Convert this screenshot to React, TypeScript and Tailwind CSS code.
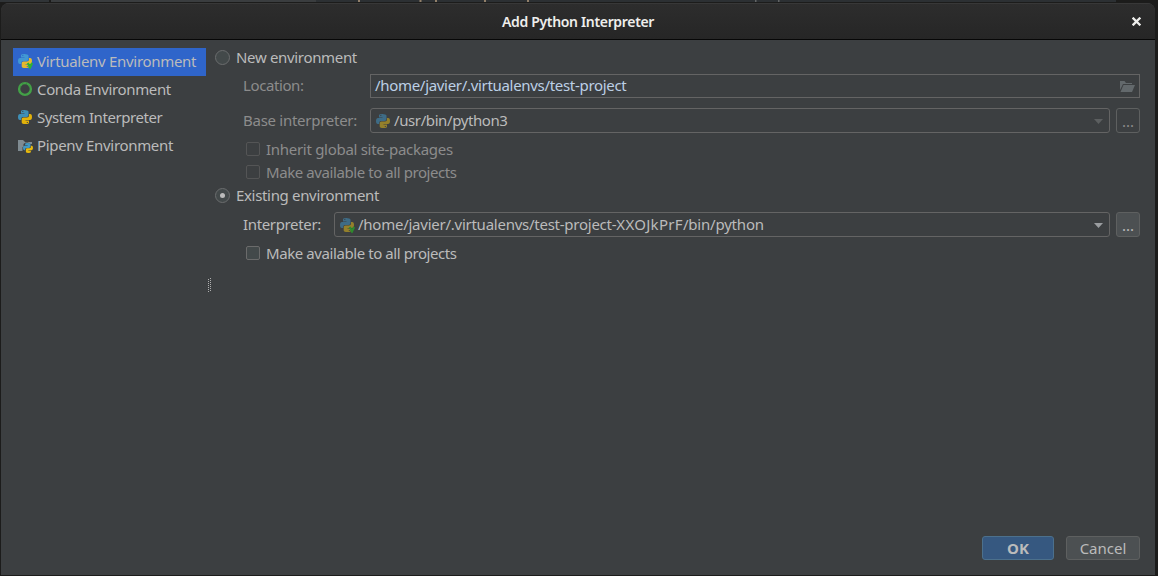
import type { ReactNode } from "react";

type Badge = "none" | "venv";

function PythonLogo({ blue, yellow, green = "#2fb52f", badge = "none" }: { blue: string; yellow: string; green?: string; badge?: Badge }) {
  return (
    <svg width="16" height="16" viewBox="0 0 16 16" className="shrink-0">
      <path
        fill={blue}
        fillRule="evenodd"
        d="M4 2.300Q4 1 7.500 1T11.500 2.600V6Q11.500 8 9.500 8H6Q4.200 8 4.200 10v1H2.800Q1 11 1 8t2-3h4.500V4.500H4zM5.300 2v1h1V2z"
      />
      <path
        fill={yellow}
        fillRule="evenodd"
        d="M12 5h1.200Q15 5 15 8t-2 3H8.500v.5H12v2q0 1.500-3.500 1.500T4.700 13.400v-3.200q0-1.700 1.700-1.700H10q2 0 2-1.900zM9.800 13v1h1v-1z"
      />
      {badge === "venv" && <path fill="none" stroke={green} strokeWidth="2.200" d="M10.800 10l2.200 4.500L15.200 10" />}
    </svg>
  );
}

function CondaLogo() {
  return (
    <svg width="16" height="16" viewBox="0 0 16 16" className="shrink-0">
      <circle cx="8" cy="8" r="5.900" fill="none" stroke="#43a047" strokeWidth="2.400" />
      <path d="M3 5l1.400 1M5.500 2.500l.8 1.500M9.500 2.200l-.4 1.500M12.700 5l-1.400.8" stroke="#34753a" strokeWidth=".6" />
    </svg>
  );
}

function PipenvLogo() {
  return (
    <svg width="16" height="16" viewBox="0 0 16 16" className="shrink-0">
      <path fill="#7f8b91" d="M1 3h5l2 2h7v2H13L11 5.500H8.500L6.500 7v3H5.500v4H1z" />
      <svg x="6" y="6" width="10" height="10" viewBox="1 1 14 14">
        <path fill="#4198c2" d="M4 2.200Q4 1 7.500 1T11.500 2.600V6Q11.500 8 9 8H6Q4 8 4 10v1H2.800Q1 11 1 8t2-3h4.500V4H4z" />
        <path fill="#e7b90d" d="M12 5h1.200Q15 5 15 8t-2 3H8.500v1H12v1.700q0 1.300-3.500 1.300T5 13.300v-2.900q0-1.900 1.900-1.900H10q2 0 2-1.900z" />
      </svg>
    </svg>
  );
}

function OpenFolder() {
  return (
    <svg width="16" height="14" viewBox="0 0 16 14" className="shrink-0">
      <path fill="#63696c" d="M1 2h4.500l1.500 2h6v1H4L1 11z" />
      <path fill="#63696c" d="M4.500 6H16l-3 7H1.500z" />
    </svg>
  );
}

function Arrow({ className }: { className: string }) {
  return (
    <svg width="9" height="5" viewBox="0 0 9 5" className={className}>
      <path fill="currentColor" d="M0 0h9L4.500 5z" />
    </svg>
  );
}

function SideItem({ icon, children, selected = false, tracking }: { icon: ReactNode; children: ReactNode; selected?: boolean; tracking: string }) {
  return (
    <li className={`flex h-7 items-center gap-1 pb-0.5 pl-1 ${selected ? "bg-[#2f65ca]" : ""}`}>
      {icon}
      <span className={tracking}>{children}</span>
    </li>
  );
}

function Radio({ checked = false, children }: { checked?: boolean; children: ReactNode }) {
  return (
    <label className="flex h-[23px] items-center gap-1.5">
      <span className="flex size-[15px] items-center justify-center rounded-full border border-[#6b6d6e] bg-[#43494a]">
        {checked && <span className="size-[5px] rounded-full bg-[#bbbbbb]" />}
      </span>
      <span className="pb-0.5 tracking-[-0.33px]">{children}</span>
    </label>
  );
}

function Check({ disabled = false, children, tracking }: { disabled?: boolean; children: ReactNode; tracking: string }) {
  return (
    <label className={`flex h-[23px] items-center gap-1.5 pl-[31px] ${disabled ? "text-[#8c8c8c]" : ""}`}>
      <span
        className={`mb-px size-[14px] rounded-[2px] border ${disabled ? "border-[#545556]" : "border-[#6b6b6b] bg-[#43494a]"}`}
      />
      <span className={`pb-0.5 ${tracking}`}>{children}</span>
    </label>
  );
}

export default function App() {
  return (
    <div className="h-[576px] w-[1158px] overflow-hidden bg-[#1c1c1b] font-['Noto_Sans',sans-serif] text-[15px] leading-5 whitespace-nowrap text-[#bbbbbb]">
      <div className="flex h-[3px] items-start">
        <div className="h-0.5 w-[49px] bg-[#303437]" />
        <div className="ml-0.5 h-0.5 w-[265px] bg-[#3a3d3f]" />
        <svg width="800" height="2" viewBox="0 0 800 2" className="bg-[#2c3033]">
          <path stroke="#92806a" strokeWidth="2" d="M42 1h2M103.500 1h2M119 1h2M168 1h2M211 1h2" />
          <path stroke="#626566" strokeWidth="2" d="M439 1h1.500M462 1h1.500" />
        </svg>
      </div>
      <div className="ml-px flex h-[572px] w-[1154px] flex-col overflow-hidden rounded-t-lg bg-[#3c3f41]">
        <header className="grid h-[37px] shrink-0 grid-cols-[1fr_auto_1fr] items-center border-t border-b border-t-[#383838] border-b-[#070707] bg-linear-to-b from-[#2d2d2d] to-[#262626] text-[#eeeeec]">
          <span />
          <h1 className="text-[14px] font-semibold tracking-[-0.33px]">Add Python Interpreter</h1>
          <svg width="9" height="9" viewBox="0 0 9 9" className="mr-3.5 mb-px justify-self-end">
            <path d="M1.500 1.500l6 6M7.500 1.500l-6 6" stroke="currentColor" strokeWidth="2.300" strokeLinecap="square" />
          </svg>
        </header>

        <main className="flex grow pl-3">
          <ul className="w-[193px] pt-2">
            <SideItem
              selected
              tracking="tracking-[-0.3px]"
              icon={<PythonLogo blue="#4198d3" yellow="#e5b92e" badge="venv" />}
            >
              Virtualenv Environment
            </SideItem>
            <SideItem tracking="tracking-[-0.35px]" icon={<CondaLogo />}>
              Conda Environment
            </SideItem>
            <SideItem tracking="tracking-[-0.42px]" icon={<PythonLogo blue="#3f8fb5" yellow="#e2b20a" />}>
              System Interpreter
            </SideItem>
            <SideItem tracking="tracking-[-0.33px]" icon={<PipenvLogo />}>
              Pipenv Environment
            </SideItem>
          </ul>
          <svg width="9" height="15" viewBox="0 0 9 15" className="mt-[238px] shrink-0">
            <path d="M2.500 1v14M4.500 0v14" stroke="#b0b0b0" strokeDasharray="1 1" />
          </svg>

          <section className="w-[925px] pt-1.5">
            <Radio>New environment</Radio>
            <div className="mt-[5px] flex h-6 items-center pl-7 text-[#8c8c8c]">
              <span className="w-[127px] pb-0.5 tracking-[-0.4px]">Location:</span>
              <div className="flex h-6 grow items-center justify-between border border-[#646464] pr-1 pl-1 text-[#bcd0e6]">
                <span className="pb-0.5 tracking-[-0.31px]">/home/javier/.virtualenvs/test-project</span>
                <OpenFolder />
              </div>
            </div>
            <div className="mt-2.5 flex h-[25px] items-center pl-7 text-[#8c8c8c]">
              <span className="w-[127px] pb-0.5 tracking-[-0.27px]">Base interpreter:</span>
              <div className="flex h-[25px] grow items-center gap-[3px] rounded-[3px] border border-[#646464] px-1 text-[#bbbbbb]">
                <PythonLogo blue="#3e6c86" yellow="#94802b" />
                <span className="grow pb-0.5 tracking-[-0.4px]">/usr/bin/python3</span>
                <Arrow className="mt-px mr-0.5 text-[#5c5f60]" />
              </div>
              <button className="ml-1.5 h-[25px] w-6 rounded-[3px] border border-[#5e6060] text-[#8c8c8c]">...</button>
            </div>
            <div className="mt-[5px]">
              <Check disabled tracking="tracking-[-0.29px]">
                Inherit global site-packages
              </Check>
              <Check disabled tracking="tracking-[-0.42px]">
                Make available to all projects
              </Check>
            </div>
            <Radio checked>Existing environment</Radio>
            <div className="mt-[5px] flex h-[25px] items-center pl-7">
              <span className="w-[91px] pb-0.5 tracking-[-0.35px]">Interpreter:</span>
              <div className="flex h-[25px] grow items-center gap-[3px] rounded-[3px] border border-[#646464] px-1">
                <PythonLogo blue="#3e6c86" yellow="#94802b" green="#2d8a2f" badge="venv" />
                <span className="grow pb-0.5 tracking-[-0.25px]">
                  /home/javier/.virtualenvs/test-project-<span className="tracking-[0.3px]">XXOJkPrF</span>
                  <span className="tracking-[-0.2px]">/bin/python</span>
                </span>
                <Arrow className="mt-px mr-0.5 text-[#9a9da0]" />
              </div>
              <button className="ml-1.5 h-[25px] w-6 rounded-[3px] border border-[#5e6060] bg-[#4c5052]">...</button>
            </div>
            <div className="mt-[5px]">
              <Check tracking="tracking-[-0.42px]">Make available to all projects</Check>
            </div>
          </section>
        </main>

        <footer className="flex justify-end gap-3 pr-[15px] pb-[15px]">
          <button className="h-6 w-[72px] rounded-[3px] border border-[#4c708c] bg-[#365880] leading-[22px] font-bold">OK</button>
          <button className="h-6 w-[74px] rounded-[3px] border border-[#5e6060] bg-[#4c5052] leading-[22px]">Cancel</button>
        </footer>
      </div>
    </div>
  );
}
